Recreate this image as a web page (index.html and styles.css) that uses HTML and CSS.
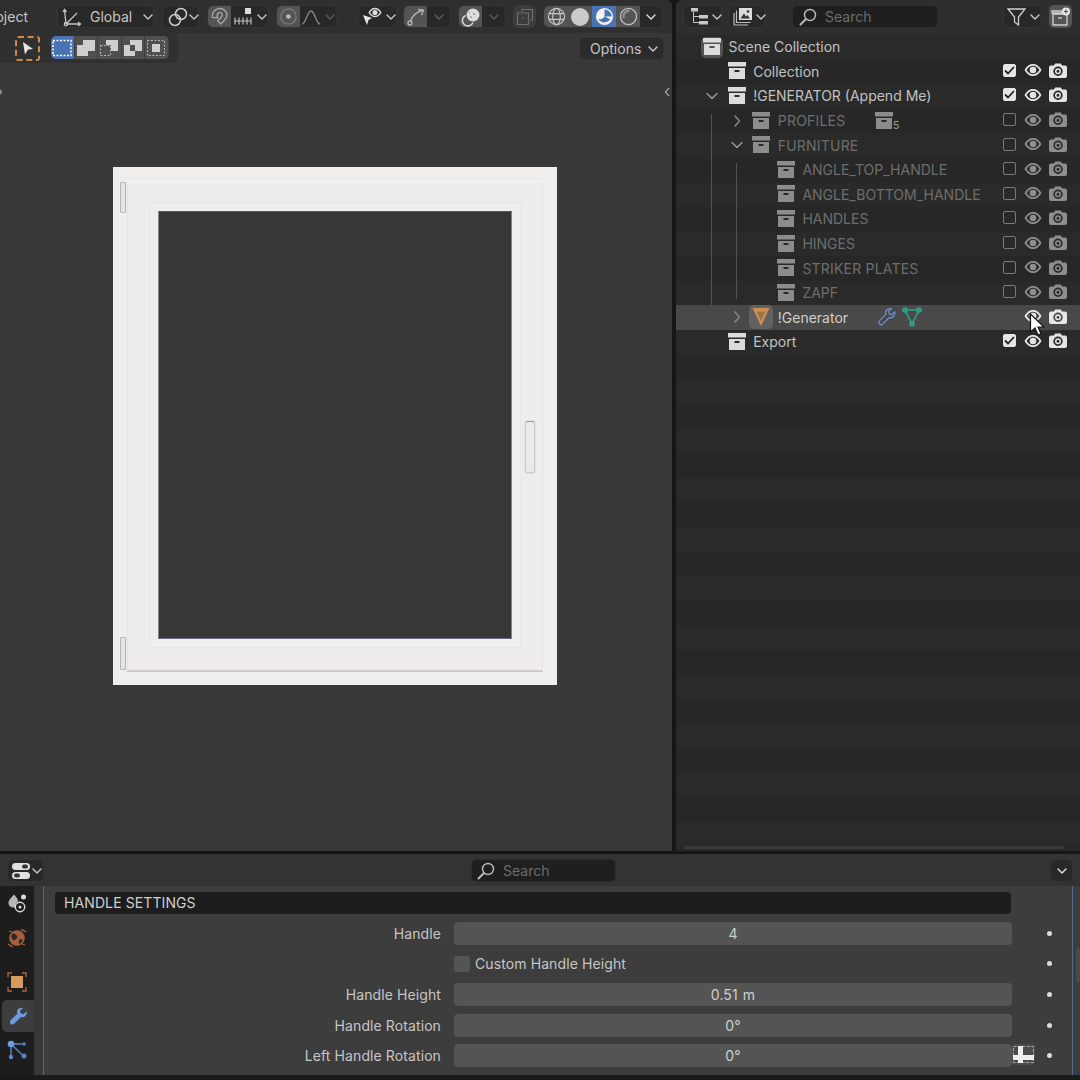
FILE: index.html
```html
<!DOCTYPE html>
<html lang="en">
<head>
<meta charset="UTF-8">
<title>Blender - Window Generator</title>
<link rel="stylesheet" href="styles.css">
</head>
<body>

<!-- shared icons -->
<svg class="defs" width="0" height="0">
  <symbol id="box" viewBox="0 0 18 17">
    <path fill-rule="evenodd" d="M0 0h18v4.500H0zM1 6h16v11H1zM6.500 8v2h5V8z"/>
  </symbol>
  <symbol id="eye" viewBox="0 0 18 14">
    <path fill-rule="evenodd" d="M0.500 7C3 2.600 6 1 9 1s6 1.600 8.500 6C15 11.400 12 13 9 13S3 11.400 0.500 7zM2.600 7C4.500 10 6.800 11.300 9 11.300S13.500 10 15.400 7C13.500 4 11.200 2.700 9 2.700S4.500 4 2.600 7zM9 3.700a3.300 3.300 0 1 1 0 6.600a3.300 3.300 0 0 1 0-6.600z"/>
  </symbol>
  <symbol id="cam" viewBox="0 0 18 15">
    <path fill-rule="evenodd" d="M2 2.500h3L6.200 0.500h5.600L13 2.500h3a2 2 0 0 1 2 2V13a2 2 0 0 1-2 2H2a2 2 0 0 1-2-2V4.500a2 2 0 0 1 2-2zM9 3.500a4.700 4.700 0 1 0 0 9.400a4.700 4.700 0 0 0 0-9.400zM9 5.200a3 3 0 1 1 0 6a3 3 0 0 1 0-6zM9 6.700a1.500 1.500 0 1 0 0 3a1.500 1.500 0 0 0 0-3z"/>
  </symbol>
  <symbol id="down" viewBox="0 0 10 6">
    <path d="M1 1l4 4l4-4" fill="none" stroke="currentColor" stroke-width="1.400" stroke-linecap="round" stroke-linejoin="round"/>
  </symbol>
  <symbol id="right" viewBox="0 0 6 12">
    <path d="M1 1l4.500 5L1 11" fill="none" stroke="currentColor" stroke-width="1.400" stroke-linecap="round" stroke-linejoin="round"/>
  </symbol>
  <symbol id="open" viewBox="0 0 12 6">
    <path d="M1 0.500l5 5l5-5" fill="none" stroke="currentColor" stroke-width="1.400" stroke-linecap="round" stroke-linejoin="round"/>
  </symbol>
  <symbol id="glass" viewBox="0 0 18 18">
    <circle cx="11" cy="7" r="5.500" fill="none" stroke="currentColor" stroke-width="1.400"/>
    <path d="M7 11l-5.500 5.500" stroke="currentColor" stroke-width="2" stroke-linecap="round"/>
  </symbol>
  <symbol id="wrench" viewBox="0 0 20 20">
    <path d="M18.500 4.500l-3.300 3-2.800-1-.7-2.800L15 1c-2.800-1-6 .6-6.500 3.500c-.2 1 0 1.800.2 2.500L1.700 14c-1.100 1.200-.9 2.900.1 3.800c1 1 2.600 1 3.700-.1l6.800-7c.9.200 1.800.300 2.700 0c2.700-.7 4.300-3.300 3.500-6.200z"/>
  </symbol>
</svg>

<div class="top">

  <!-- 3d viewport -->
  <main class="viewport">
    <div class="vp-header">
      <span class="mode-text">Object</span>
      <div class="btn global">
        <svg class="ic" width="20" height="20" viewBox="0 0 20 20" fill="none" stroke="#c4c4c4" stroke-width="1.300"><path d="M4 17L2.500 3M1 5l1.500-2.500L4.500 5M4 17h14M16 15l2.500 2L16 19M4 17L15 6"/><circle cx="4" cy="17" r="1.700"/></svg>
        <span>Global</span>
        <svg class="caret"><use href="#down"/></svg>
      </div>
      <div class="btn link">
        <svg width="20" height="20" viewBox="0 0 20 20" fill="none" stroke="#cfcfcf" stroke-width="1.500"><circle cx="7" cy="13" r="5.500"/><circle cx="13" cy="7" r="5.500"/></svg>
        <svg class="caret"><use href="#down"/></svg>
      </div>
      <div class="group snap">
        <span class="seg on w23"><svg width="19" height="19" viewBox="0 0 20 20" fill="none" stroke="#a8a8a8" stroke-width="1.400" stroke-linejoin="round"><path d="M2.500 11A7.500 7.500 0 0 1 18 8C18 11.500 15 14.500 11.500 18L8 14.500C10.500 12 13 10.500 13 8A2.700 2.700 0 0 0 7.700 8.500L7.700 11.500z"/></svg></span>
        <span class="seg rest">
          <svg width="20" height="20" viewBox="0 0 20 20"><rect x="12" y="1" width="6" height="6" fill="#dcdcdc"/><path d="M1 14h17M2 10.500v7M6 10.500v7M10 10.500v7M14 10.500v7M18 10.500v7" stroke="#bcbcbc" stroke-width="1.200"/></svg>
          <svg class="caret"><use href="#down"/></svg>
        </span>
      </div>
      <div class="group prop">
        <span class="seg on w23"><svg width="19" height="19" viewBox="0 0 20 20"><circle cx="10" cy="10" r="8" fill="none" stroke="#7d7d7d" stroke-width="1.400"/><circle cx="10" cy="10" r="2.500" fill="#b8b8b8"/></svg></span>
        <span class="seg rest dim">
          <svg width="20" height="20" viewBox="0 0 20 20" fill="none" stroke="#858585" stroke-width="1.400"><path d="M1 17c4 0 5-13 9-13s5 13 9 13"/></svg>
          <svg class="caret faded"><use href="#down"/></svg>
        </span>
      </div>
      <div class="btn vis">
        <svg width="22" height="20" viewBox="0 0 22 20"><use href="#eye" x="6" y="0" width="14" height="11" fill="#dcdcdc"/><path d="M1 8l9 3l-3.500 2L5 18z" fill="#e8e8e8"/></svg>
        <svg class="caret"><use href="#down"/></svg>
      </div>
      <div class="group gizmo">
        <span class="seg on w23"><svg width="20" height="20" viewBox="0 0 20 20" fill="none" stroke="#b4b4b4" stroke-width="1.400"><path d="M4 15C6 9 10 5 17 3M12 2.500l5.500 .5l-2 5"/><circle cx="4" cy="16" r="2"/></svg></span>
        <span class="seg rest dim"><svg class="caret faded"><use href="#down"/></svg></span>
      </div>
      <div class="group overlay">
        <span class="seg on w23"><svg width="20" height="20" viewBox="0 0 20 20"><circle cx="12" cy="8" r="6.500" fill="#dcdcdc"/><path d="M9 9l2 2M12 6l2 2M8 5l1 1" stroke="#777" stroke-width="1"/><path d="M4.500 8.500a5.500 5.500 0 1 0 7.500 7" fill="none" stroke="#dcdcdc" stroke-width="1.500"/></svg></span>
        <span class="seg rest dim"><svg class="caret faded"><use href="#down"/></svg></span>
      </div>
      <div class="xray">
        <svg width="18" height="18" viewBox="0 0 18 18" fill="none" stroke="#6e6e6e" stroke-width="1.200"><path d="M6 4V1.500h10.500V12H14M1.500 5h11v11.500h-11z"/><path d="M6 10h2" stroke-width="1"/></svg>
      </div>
      <div class="group shading">
        <span class="seg shade"><svg width="19" height="19" viewBox="0 0 20 20" fill="none" stroke="#c8c8c8" stroke-width="1.200"><circle cx="10" cy="10" r="8.500"/><ellipse cx="10" cy="10" rx="4" ry="8.500"/><path d="M2 7h16M2 13h16"/></svg></span>
        <span class="seg shade"><svg width="18" height="18" viewBox="0 0 18 18"><circle cx="9" cy="9" r="9" fill="#cdcbc8"/></svg></span>
        <span class="seg shade active"><svg width="19" height="19" viewBox="0 0 20 20"><circle cx="10" cy="10" r="9" fill="#f2f2f2"/><path d="M10 2.500A7.500 7.500 0 0 1 17.500 10L10 10zM3.500 13c3 0 5.500-1 6.500-3l6 3c-2 3.500-9 5-12.500 0z" fill="#4a73b3"/></svg></span>
        <span class="seg shade"><svg width="19" height="19" viewBox="0 0 20 20" fill="none" stroke="#bdbdbd" stroke-width="1.400"><circle cx="10" cy="10" r="8.500"/><path d="M5 12a6 6 0 0 1 6-8" stroke="#8f8f8f" stroke-width="2.500"/></svg></span>
        <span class="seg shade-end"><svg class="caret lit"><use href="#down"/></svg></span>
      </div>
    </div>

    <div class="vp-tools">
      <div class="tool-strip">
        <span class="active-tool">
          <svg width="12" height="13" viewBox="0 0 12 13"><path d="M1 0l10 7l-5 .5L3 12.500z" fill="#e6e6e6"/></svg>
        </span>
        <div class="select-modes">
          <span class="sel sel-on"><svg width="20" height="18" viewBox="0 0 20 18"><rect x="1" y="1.500" width="18" height="15" fill="none" stroke="#fff" stroke-width="1.500" stroke-dasharray="2 1.500"/></svg></span>
          <span class="sel"><svg width="20" height="18" viewBox="0 0 20 18"><path d="M7 1h12v11h-7v5H1V6h6z" fill="#cfcfcf"/></svg></span>
          <span class="sel"><svg width="20" height="18" viewBox="0 0 20 18"><path d="M7 1h12v11h-7V6H7z" fill="#cfcfcf"/><rect x="1.500" y="6.500" width="10" height="10" fill="none" stroke="#b4b4b4" stroke-dasharray="2 1.500"/></svg></span>
          <span class="sel"><svg width="20" height="18" viewBox="0 0 20 18"><path fill-rule="evenodd" d="M7 1h12v11h-7v5H1V6h6zM7 6v6h5V6z" fill="#cfcfcf"/></svg></span>
          <span class="sel"><svg width="20" height="18" viewBox="0 0 20 18"><rect x="1.500" y="1.500" width="17" height="15" fill="none" stroke="#b4b4b4" stroke-dasharray="2 1.500"/><rect x="6" y="5" width="8" height="8" fill="#cfcfcf"/></svg></span>
        </div>
      </div>
      <div class="btn options"><span>Options</span><svg class="caret"><use href="#down"/></svg></div>
    </div>

    <div class="scene">
      <div class="sash">
        <div class="frame">
          <div class="glass"></div>
        </div>
        <span class="hinge hinge-top"></span>
        <span class="hinge hinge-bottom"></span>
        <span class="handle"></span>
      </div>
    </div>

    <svg class="edge edge-l" width="5" height="10"><use href="#right"/></svg>
    <svg class="edge edge-r" width="5" height="10" viewBox="0 0 6 12"><path d="M5 1L.5 6L5 11" fill="none" stroke="currentColor" stroke-width="1.400"/></svg>
  </main>

  <!-- outliner -->
  <aside class="outliner">
    <div class="ol-header">
      <div class="btn ol-display">
        <svg width="22" height="20" viewBox="0 0 22 20" fill="#c8c8c8"><rect x="1" y="1" width="7" height="3.500"/><rect x="9" y="8" width="9" height="3.500"/><rect x="9" y="14" width="9" height="3.500"/><path d="M3.500 4.500v11H9M3.500 9.500H9" fill="none" stroke="#c8c8c8"/></svg>
        <svg class="caret"><use href="#down"/></svg>
      </div>
      <div class="btn ol-mode">
        <svg width="22" height="20" viewBox="0 0 22 20"><path d="M1 6v12h14M3.500 3.500v12h14" fill="none" stroke="#bdbdbd" stroke-width="1.200"/><rect x="6" y="1" width="13" height="12" fill="#dcdcdc"/><path d="M7.500 11.500l3.500-5l2 3l1.500-1.500l2.500 3.500z" fill="#333"/><circle cx="15" cy="4.500" r="1.300" fill="#333"/></svg>
        <svg class="caret"><use href="#down"/></svg>
      </div>
      <div class="search ol-search">
        <svg width="18" height="18"><use href="#glass"/></svg>
        <span>Search</span>
      </div>
      <div class="btn ol-filter">
        <svg width="19" height="18" viewBox="0 0 19 18" fill="none" stroke="#cfcfcf" stroke-width="1.300"><path d="M1 1h17l-6.500 8v8l-4-3V9z"/></svg>
        <svg class="caret"><use href="#down"/></svg>
      </div>
      <div class="ol-new">
        <svg width="20" height="20" viewBox="0 0 20 20"><path d="M1 4h10v2H1zM2 7h14v11H2z" fill="none" stroke="#cfcfcf" stroke-width="1.300"/><path d="M7 11h4" stroke="#cfcfcf" stroke-width="1.300"/><circle cx="15" cy="4.500" r="4" fill="#e6e6e6"/><path d="M15 2.500v4M13 4.500h4" stroke="#555" stroke-width="1.200"/></svg>
      </div>
    </div>

    <div class="tree">
      <span class="guide guide-a"></span>
      <span class="guide guide-b"></span>

      <div class="row lv0">
        <span class="slot scene-icon"><svg class="box"><use href="#box"/></svg></span>
        <span class="name">Scene Collection</span>
      </div>

      <div class="row lv1">
        <span class="slot"></span>
        <span class="slot"><svg class="box"><use href="#box"/></svg></span>
        <span class="name">Collection</span>
        <div class="vis-cols"><span class="check on"><svg width="11" height="9" viewBox="0 0 11 9"><path d="M1 4.500L4 7.500L10 1" fill="none" stroke="#222" stroke-width="1.800"/></svg></span><svg class="eye"><use href="#eye"/></svg><svg class="cam"><use href="#cam"/></svg></div>
      </div>

      <div class="row lv1">
        <span class="slot"><svg class="open"><use href="#open"/></svg></span>
        <span class="slot"><svg class="box"><use href="#box"/></svg></span>
        <span class="name">!GENERATOR (Append Me)</span>
        <div class="vis-cols"><span class="check on"><svg width="11" height="9" viewBox="0 0 11 9"><path d="M1 4.500L4 7.500L10 1" fill="none" stroke="#222" stroke-width="1.800"/></svg></span><svg class="eye"><use href="#eye"/></svg><svg class="cam"><use href="#cam"/></svg></div>
      </div>

      <div class="row lv2 off">
        <span class="slot"><svg class="closed"><use href="#right"/></svg></span>
        <span class="slot"><svg class="box"><use href="#box"/></svg></span>
        <span class="name name-fixed wide">PROFILES</span>
        <span class="child-count"><svg class="box"><use href="#box"/></svg><small>5</small></span>
        <div class="vis-cols"><span class="check"></span><svg class="eye"><use href="#eye"/></svg><svg class="cam"><use href="#cam"/></svg></div>
      </div>

      <div class="row lv2 off">
        <span class="slot"><svg class="open"><use href="#open"/></svg></span>
        <span class="slot"><svg class="box"><use href="#box"/></svg></span>
        <span class="name wide">FURNITURE</span>
        <div class="vis-cols"><span class="check"></span><svg class="eye"><use href="#eye"/></svg><svg class="cam"><use href="#cam"/></svg></div>
      </div>

      <div class="row lv3 off">
        <span class="slot"></span>
        <span class="slot"><svg class="box"><use href="#box"/></svg></span>
        <span class="name">ANGLE_TOP_HANDLE</span>
        <div class="vis-cols"><span class="check"></span><svg class="eye"><use href="#eye"/></svg><svg class="cam"><use href="#cam"/></svg></div>
      </div>

      <div class="row lv3 off">
        <span class="slot"></span>
        <span class="slot"><svg class="box"><use href="#box"/></svg></span>
        <span class="name">ANGLE_BOTTOM_HANDLE</span>
        <div class="vis-cols"><span class="check"></span><svg class="eye"><use href="#eye"/></svg><svg class="cam"><use href="#cam"/></svg></div>
      </div>

      <div class="row lv3 off">
        <span class="slot"></span>
        <span class="slot"><svg class="box"><use href="#box"/></svg></span>
        <span class="name">HANDLES</span>
        <div class="vis-cols"><span class="check"></span><svg class="eye"><use href="#eye"/></svg><svg class="cam"><use href="#cam"/></svg></div>
      </div>

      <div class="row lv3 off">
        <span class="slot"></span>
        <span class="slot"><svg class="box"><use href="#box"/></svg></span>
        <span class="name">HINGES</span>
        <div class="vis-cols"><span class="check"></span><svg class="eye"><use href="#eye"/></svg><svg class="cam"><use href="#cam"/></svg></div>
      </div>

      <div class="row lv3 off">
        <span class="slot"></span>
        <span class="slot"><svg class="box"><use href="#box"/></svg></span>
        <span class="name wide">STRIKER PLATES</span>
        <div class="vis-cols"><span class="check"></span><svg class="eye"><use href="#eye"/></svg><svg class="cam"><use href="#cam"/></svg></div>
      </div>

      <div class="row lv3 off">
        <span class="slot"></span>
        <span class="slot"><svg class="box"><use href="#box"/></svg></span>
        <span class="name">ZAPF</span>
        <div class="vis-cols"><span class="check"></span><svg class="eye"><use href="#eye"/></svg><svg class="cam"><use href="#cam"/></svg></div>
      </div>

      <div class="row lv2 hover">
        <span class="slot"><svg class="closed"><use href="#right"/></svg></span>
        <span class="slot object-icon"><svg width="18" height="18" viewBox="0 0 16 17"><path d="M4 3.500h8L8 12z" fill="#9a7350"/><path fill-rule="evenodd" d="M0 0h16L8 17zM4 3.500L8 12l4-8.500z" fill="#cf8f52"/></svg></span>
        <span class="name name-gen">!Generator</span>
        <svg class="mod-icon" width="18" height="18" fill="none" stroke="#6f93d0" stroke-width="1.300"><use href="#wrench"/></svg>
        <svg class="mesh-icon" width="20" height="20" viewBox="0 0 20 20" fill="none" stroke="#2aa78b" stroke-width="1.600"><path d="M3 3h14L10 17z"/><circle cx="3" cy="3" r="2"/><circle cx="17" cy="3" r="2"/><circle cx="10" cy="17" r="2"/></svg>
        <div class="vis-cols"><span class="check none"></span><svg class="eye"><use href="#eye"/></svg><svg class="cam"><use href="#cam"/></svg></div>
      </div>

      <div class="row lv1">
        <span class="slot"></span>
        <span class="slot"><svg class="box"><use href="#box"/></svg></span>
        <span class="name">Export</span>
        <div class="vis-cols"><span class="check on"><svg width="11" height="9" viewBox="0 0 11 9"><path d="M1 4.500L4 7.500L10 1" fill="none" stroke="#222" stroke-width="1.800"/></svg></span><svg class="eye"><use href="#eye"/></svg><svg class="cam"><use href="#cam"/></svg></div>
      </div>

      <svg class="cursor" width="16" height="24" viewBox="0 0 16 24"><path d="M1.500 1v18l4.500-4l3 7l3-1.300l-3-6.700h6z" fill="#fff" stroke="#111" stroke-width="1.200"/></svg>
      <span class="ol-scroll"></span>
    </div>
  </aside>
</div>

<!-- properties editor -->
<section class="properties">
  <div class="pr-header">
    <div class="btn pr-editor">
      <svg width="20" height="20" viewBox="0 0 20 20"><rect x="1" y="2" width="18" height="7" rx="3.500" fill="#e0e0e0"/><rect x="11" y="3.500" width="6" height="4" rx="2" fill="#333"/><rect x="1" y="11" width="18" height="7" rx="3.500" fill="#e0e0e0"/><rect x="3" y="12.500" width="6" height="4" rx="2" fill="#333"/></svg>
      <svg class="caret"><use href="#down"/></svg>
    </div>
    <div class="search pr-search">
      <svg width="18" height="18"><use href="#glass"/></svg>
      <span>Search</span>
    </div>
    <div class="btn pr-menu"><svg class="caret lit"><use href="#down"/></svg></div>
  </div>

  <div class="pr-body">
    <nav class="tabs">
      <span class="tab tab-first"><svg width="20" height="20" viewBox="0 0 20 20"><path d="M7 1.500c3 3.500 4 5 4 7c-2 1-3 3-2.500 6C5 15 1.500 13.500 1.500 10C1.500 7 4 5 7 1.500z" fill="#b8b8b8"/><circle cx="16.500" cy="4" r="2.500" fill="#dcdcdc"/><circle cx="13" cy="14" r="4.700" fill="none" stroke="#dcdcdc" stroke-width="1.400"/><circle cx="13" cy="14" r="1.500" fill="#dcdcdc"/></svg></span>
      <span class="tab tab-world"><svg width="20" height="20" viewBox="0 0 20 20"><circle cx="10" cy="10" r="7.800" fill="#a5603a"/><path d="M5 6c2-1 4 0 5 2s-1 3-2 4s-3-1-4-3zM12 12c1-1 3-1 4 0c-1 2-2 3-4 4z" fill="#2a2a2a"/><path d="M2 3l3 1M18 17l-3-1M1 16c2 1.500 3 2 5 2.500M19 4c-2-1.500-3-2-5-2.500" fill="none" stroke="#a5603a" stroke-width="1.300"/></svg></span>
      <span class="tab tab-object"><svg width="20" height="20" viewBox="0 0 20 20"><rect x="4" y="4" width="12" height="12" fill="#d89b5c"/><path d="M1 5V1h4M15 1h4v4M19 15v4h-4M5 19H1v-4" fill="none" stroke="#a5683c" stroke-width="1.400"/></svg></span>
      <span class="tab tab-active"><svg width="19" height="19" fill="#6d9be0"><use href="#wrench"/></svg></span>
      <span class="tab tab-parts"><svg width="20" height="20" viewBox="0 0 20 20" fill="#5b86c8"><circle cx="4" cy="4" r="3.300" fill="#6d9be0"/><circle cx="4" cy="17" r="2.200"/><circle cx="17" cy="4" r="1.800"/><circle cx="17" cy="16" r="2.500"/><path d="M4 7v8M7 4h8M6 6l9 8.500" stroke="#5b86c8" stroke-width="1.400"/></svg></span>
    </nav>

    <div class="panel-area">
      <div class="panel">
        <div class="panel-title">HANDLE SETTINGS</div>

        <div class="prop-row">
          <label>Handle</label>
          <div class="field">4</div>
          <span class="dot"></span>
        </div>
        <div class="prop-row">
          <label></label>
          <div class="check-field"><span class="small-check"></span>Custom Handle Height</div>
          <span class="dot"></span>
        </div>
        <div class="prop-row">
          <label>Handle Height</label>
          <div class="field">0.51 m</div>
          <span class="dot"></span>
        </div>
        <div class="prop-row">
          <label>Handle Rotation</label>
          <div class="field">0°</div>
          <span class="dot"></span>
        </div>
        <div class="prop-row">
          <label>Left Handle Rotation</label>
          <div class="field">0°</div>
          <span class="dot"></span>
          <span class="decorator"><svg width="21" height="17" viewBox="0 0 21 17"><rect x=".5" y=".5" width="20" height="16" fill="none" stroke="#a8a8a8" stroke-dasharray="3 1.500"/><path d="M5 0h5v9h11v5H10v3H5v-3H0V9h5z" fill="#eee"/></svg></span>
        </div>
      </div>
    </div>
    <div class="pr-gutter"><span class="pr-thumb"></span></div>
  </div>
  <div class="pr-foot"></div>
</section>

</body>
</html>
```

FILE: styles.css
```css
* {
    box-sizing: border-box;
}

html,
body {
    margin: 0;
    height: 100%;
}

body {
    width: 1080px;
    height: 1080px;
    overflow: hidden;
    background-color: #161616;
    color: #c6c6c6;
    font-family: 'Inter', 'Liberation Sans', sans-serif;
    font-size: 14px;
    display: flex;
    flex-direction: column;
}

svg {
    display: block;
    flex: none;
}

.defs {
    position: absolute;
}

.caret {
    width: 10px;
    height: 6px;
    color: #c8c8c8;
}

.caret.faded {
    color: #5c5c5c;
}

.caret.lit {
    color: #e0e0e0;
}

/* shared button look */
.btn {
    height: 23px;
    display: flex;
    align-items: center;
    background-color: #282828;
    border: 1px solid #343434;
    border-radius: 6px;
}

.group {
    height: 23px;
    display: flex;
    background-color: #282828;
    border: 1px solid #343434;
    border-radius: 6px;
    overflow: hidden;
}

.seg {
    display: flex;
    align-items: center;
    justify-content: center;
    height: 100%;
}

.seg.on {
    background-color: #545454;
}

.w23 {
    width: 23px;
}

.seg.rest {
    flex: 1;
    gap: 4px;
}

.search {
    height: 23px;
    display: flex;
    align-items: center;
    gap: 8px;
    background-color: #1f1f1f;
    border: 1px solid #2c2c2c;
    border-radius: 5px;
    color: #6c6c6c;
    padding-left: 5px;
}

.search svg {
    color: #bcbcbc;
}

.top {
    height: 851px;
    display: flex;
    gap: 4px;
    flex: none;
}

/* viewport */
.viewport {
    position: relative;
    width: 672px;
    background-color: #383838;
    border-top-right-radius: 6px;
    overflow: hidden;
}

.vp-header {
    height: 33px;
    padding-top: 5px;
    display: flex;
    align-items: flex-start;
    background-color: #2f2f2f;
}

.mode-text {
    width: 28px;
    margin-right: 29px;
    direction: rtl;
    overflow: hidden;
    white-space: nowrap;
    line-height: 23px;
    text-align: left;
}

.global {
    width: 97px;
    padding-left: 4px;
    gap: 8px;
}

.global .caret {
    margin-left: 3px;
}

.link {
    width: 37px;
    margin-left: 8px;
    padding-left: 5px;
    gap: 1px;
}

.snap {
    width: 62px;
    margin-left: 8px;
}

.prop {
    width: 61px;
    margin-left: 7px;
}

.vis {
    width: 39px;
    margin-left: 21px;
    padding-left: 3px;
    gap: 2px;
}

.gizmo {
    width: 48px;
    margin-left: 6px;
}

.overlay {
    width: 48px;
    margin-left: 7px;
}

.xray {
    width: 23px;
    height: 23px;
    margin-left: 7px;
    display: flex;
    align-items: center;
    justify-content: center;
    background-color: #3c3c3c;
    border-radius: 6px;
}

.shading {
    width: 120px;
    margin-left: 7px;
}

.shade {
    width: 24px;
    background-color: #545454;
}

.shade.active {
    background-color: #4a73b3;
}

.shade-end {
    flex: 1;
}

.vp-tools {
    height: 32px;
    display: flex;
    align-items: flex-start;
    justify-content: space-between;
    padding-right: 8px;
}

.tool-strip {
    width: 178px;
    height: 30px;
    padding: 3px 0 0 15px;
    display: flex;
    gap: 11px;
    background-color: #303030;
    border-bottom-right-radius: 6px;
}

.active-tool {
    width: 25px;
    height: 25px;
    display: flex;
    align-items: center;
    justify-content: center;
    border: 2px dashed #cf8a45;
    border-radius: 3px;
}

.select-modes {
    height: 23px;
    display: flex;
    border-radius: 5px;
    overflow: hidden;
}

.sel {
    width: 23.500px;
    display: flex;
    align-items: center;
    justify-content: center;
    background-color: #505050;
    border-right: 1px solid #3e3e3e;
}

.sel-on {
    background-color: #4a73b3;
}

.options {
    width: 85px;
    margin-top: 4px;
    padding-left: 10px;
    gap: 7px;
    background-color: #2b2b2b;
}

/* window model */
.scene {
    padding: 102px 0 0 113px;
}

.sash {
    position: relative;
    width: 444px;
    height: 518px;
    padding: 14px;
    background-color: #f0eeed;
}

.frame {
    width: 416px;
    height: 490px;
    padding: 29px 30px 31px 30px;
    background-color: #efedec;
    border: 1px solid #e6e4e3;
    border-top-color: #f6f5f4;
    border-bottom-color: #d2cfcd;
    box-shadow: 0 1px 0 #c9c6c4;
}

.glass {
    width: 354px;
    height: 428px;
    background-color: #373737;
    border: 1px solid #8a8886;
    border-top-color: #555;
    border-bottom-color: #6e6a85;
    box-shadow: 0 0 0 8px #f0eeed, 0 0 0 9px #e9e7e6;
}

.hinge {
    position: absolute;
    left: 7px;
    width: 6px;
    background-color: #e6e4e2;
    border: 1px solid #b9b7b5;
    border-radius: 1px;
}

.hinge-top {
    top: 15px;
    height: 31px;
}

.hinge-bottom {
    top: 470px;
    height: 33px;
}

.handle {
    position: absolute;
    left: 412px;
    top: 254px;
    width: 10px;
    height: 52px;
    background-color: #ebeaea;
    border: 1px solid #cdcbc9;
    border-top-color: #9a9a9a;
    border-radius: 3px;
    box-shadow: 0 0 2px #c4c2c0;
}

.edge {
    position: absolute;
    top: 87px;
    color: #a8a8a8;
}

.edge-l {
    left: -3px;
}

.edge-r {
    left: 665px;
}

/* outliner */
.outliner {
    width: 404px;
    display: flex;
    flex-direction: column;
    background-color: #2e2e2e;
    border-top-left-radius: 6px;
    overflow: hidden;
}

.ol-header {
    height: 34.500px;
    flex: none;
    padding: 5px 7px 0 7px;
    display: flex;
    align-items: flex-start;
}

.ol-display {
    width: 39px;
    padding-left: 6px;
    gap: 0;
}

.ol-mode {
    width: 38px;
    margin-left: 6px;
    padding-left: 4px;
    gap: 1px;
}

.ol-search {
    width: 146px;
    margin-left: 26px;
    padding-left: 6px;
}

.ol-filter {
    width: 39px;
    margin-left: 65px;
    padding-left: 3px;
    gap: 4px;
}

.ol-new {
    width: 23px;
    height: 23px;
    margin-left: 7px;
    display: flex;
    align-items: center;
    justify-content: center;
    background-color: #545454;
    border-radius: 5px;
}

.tree {
    position: relative;
    flex: 1;
    background-image: repeating-linear-gradient(#2a2a2a 0, #2a2a2a 24.600px, #272727 24.600px, #272727 49.200px);
}

.row {
    position: relative;
    height: 24.600px;
    display: flex;
    align-items: center;
    color: #c2c2c2;
}

.row.off {
    color: #6e6e6e;
}

.lv0,
.lv1 {
    padding-left: 24px;
}

.lv2 {
    padding-left: 48.600px;
}

.lv3 {
    padding-left: 73.200px;
}

.slot {
    width: 24.600px;
    height: 100%;
    display: flex;
    align-items: center;
    justify-content: center;
    color: #a8a8a8;
}

.row .box {
    width: 18px;
    height: 17px;
    margin-top: -1px;
    fill: #dcdcdc;
}

.row.off .box {
    fill: #8c8c8c;
}

.scene-icon {
    position: relative;
}

.scene-icon::before {
    content: '';
    position: absolute;
    left: 1px;
    top: 2px;
    width: 22px;
    height: 21px;
    background-color: #545454;
    border-radius: 5px;
}

.scene-icon .box {
    position: relative;
}

.open {
    width: 12px;
    height: 6px;
    color: #9c9c9c;
}

.closed {
    width: 6px;
    height: 12px;
    color: #8a8a8a;
}

.name {
    margin-left: 4px;
    white-space: nowrap;
}

.wide {
    letter-spacing: 0.2px;
}

.name-fixed {
    width: 97px;
}

.child-count {
    display: flex;
    align-items: flex-end;
}

.child-count .box {
    margin-top: 0;
}

.child-count small {
    font-size: 11px;
    color: #9c9c9c;
    margin-bottom: -3px;
}

.vis-cols {
    margin-left: auto;
    padding-right: 9.700px;
    display: flex;
    align-items: center;
    color: #e4e4e4;
}

.off .vis-cols {
    color: #8e8e8e;
}

.vis-cols > * {
    margin-top: -2px;
}

.check {
    width: 13px;
    height: 13px;
    margin: -2px 4.800px 0 6.800px;
    display: flex;
    align-items: center;
    justify-content: center;
    border: 1px solid #7a7a7a;
    border-radius: 2px;
}

.check.on {
    background-color: #e6e6e6;
    border-color: #e6e6e6;
}

.check.none {
    border: 0;
}

.eye {
    width: 18px;
    height: 14px;
    margin-left: 3.300px;
    margin-right: 3.300px;
    fill: currentColor;
}

.cam {
    width: 18px;
    height: 15px;
    margin-left: 3.300px;
    margin-right: 3.300px;
    fill: currentColor;
}

.hover {
    background-color: #494949;
    color: #cfcfcf;
}

.hover .vis-cols {
    color: #e8e8e8;
}

.object-icon {
    position: relative;
}

.object-icon::before {
    content: '';
    position: absolute;
    left: 0;
    top: 0;
    width: 24px;
    height: 24px;
    background-color: #616161;
    border-radius: 5px;
}

.object-icon svg {
    position: relative;
}

.name-gen {
    width: 100px;
}

.mod-icon {
    fill: none;
}

.mesh-icon {
    margin-left: 6px;
}

.guide {
    position: absolute;
    width: 1px;
    background-color: #525252;
}

.guide-a {
    left: 35px;
    top: 79px;
    height: 209px;
}

.guide-b {
    left: 60px;
    top: 128px;
    height: 136px;
}

.cursor {
    position: absolute;
    left: 353px;
    top: 278px;
}

.ol-scroll {
    position: absolute;
    left: 8px;
    right: 16px;
    bottom: 2px;
    height: 3px;
    background-color: #3a3a3a;
    border-radius: 2px;
}

/* properties */
.properties {
    margin-top: 3px;
    flex: 1;
    display: flex;
    flex-direction: column;
    background-color: #373737;
}

.pr-header {
    height: 32px;
    flex: none;
    padding: 5px 7px 0 7px;
    display: flex;
    align-items: flex-start;
    background-color: #333333;
}

.pr-editor {
    width: 37px;
    padding-left: 3px;
    gap: 1px;
}

.pr-search {
    width: 145px;
    margin-left: 427px;
}

.pr-menu {
    width: 23px;
    margin-left: auto;
    justify-content: center;
}

.pr-body {
    flex: 1;
    display: flex;
    letter-spacing: 0.1px;
}

.tabs {
    width: 34px;
    padding-top: 7px;
    background-color: #1d1d1d;
    display: flex;
    flex-direction: column;
    flex: none;
}

.tab {
    height: 20px;
    display: flex;
    align-items: center;
    justify-content: center;
}

.tab-world {
    margin-top: 15px;
}

.tab-object {
    margin-top: 24px;
}

.tab-active {
    height: 32px;
    margin: 8px 0 0 2px;
    background-color: #3d3d3d;
    border-radius: 5px 0 0 5px;
}

.tab-parts {
    margin-top: 8px;
}

.panel-area {
    flex: 1;
    padding: 6px 0 0 11px;
    background-color: #3d3d3d;
    margin-left: 9px;
    border-left: 1px solid #4d6a94;
    overflow: hidden;
}

.panel {
    width: 1018px;
}

.panel-title {
    width: 956px;
    height: 22px;
    padding-left: 9px;
    line-height: 22px;
    background-color: #1d1d1d;
    border-radius: 4px;
    color: #cfcfcf;
}

.prop-row {
    position: relative;
    height: 30.600px;
    display: flex;
    align-items: center;
}

.panel-title + .prop-row {
    margin-top: 4px;
}

.prop-row label {
    width: 386px;
    text-align: right;
    color: #c6c6c6;
    flex: none;
}

.field {
    width: 558px;
    height: 23px;
    margin-left: 13px;
    line-height: 23px;
    text-align: center;
    word-spacing: 1px;
    background-color: #545454;
    border-radius: 4px;
    color: #cfcfcf;
    flex: none;
}

.check-field {
    width: 558px;
    margin-left: 13px;
    display: flex;
    align-items: center;
    gap: 5px;
    flex: none;
}

.small-check {
    width: 16px;
    height: 16px;
    background-color: #545454;
    border-radius: 3px;
}

.dot {
    width: 5px;
    height: 5px;
    margin-left: 35px;
    background-color: #dcdcdc;
    border-radius: 50%;
}

.decorator {
    position: absolute;
    left: 957px;
    top: 4px;
    width: 23px;
    height: 21px;
    display: flex;
    align-items: center;
    justify-content: center;
    background-color: #4c4c4c;
    border-radius: 3px;
}

.pr-gutter {
    position: relative;
    width: 8px;
    background-color: #3d3d3d;
    border-left: 1px solid #4d6a94;
    flex: none;
}

.pr-thumb {
    position: absolute;
    right: 0;
    top: 61px;
    width: 4px;
    height: 36px;
    background-color: #4a4a4a;
    border-radius: 2px;
}

.pr-foot {
    height: 5px;
    flex: none;
    background-color: #1a1a1a;
}
```
